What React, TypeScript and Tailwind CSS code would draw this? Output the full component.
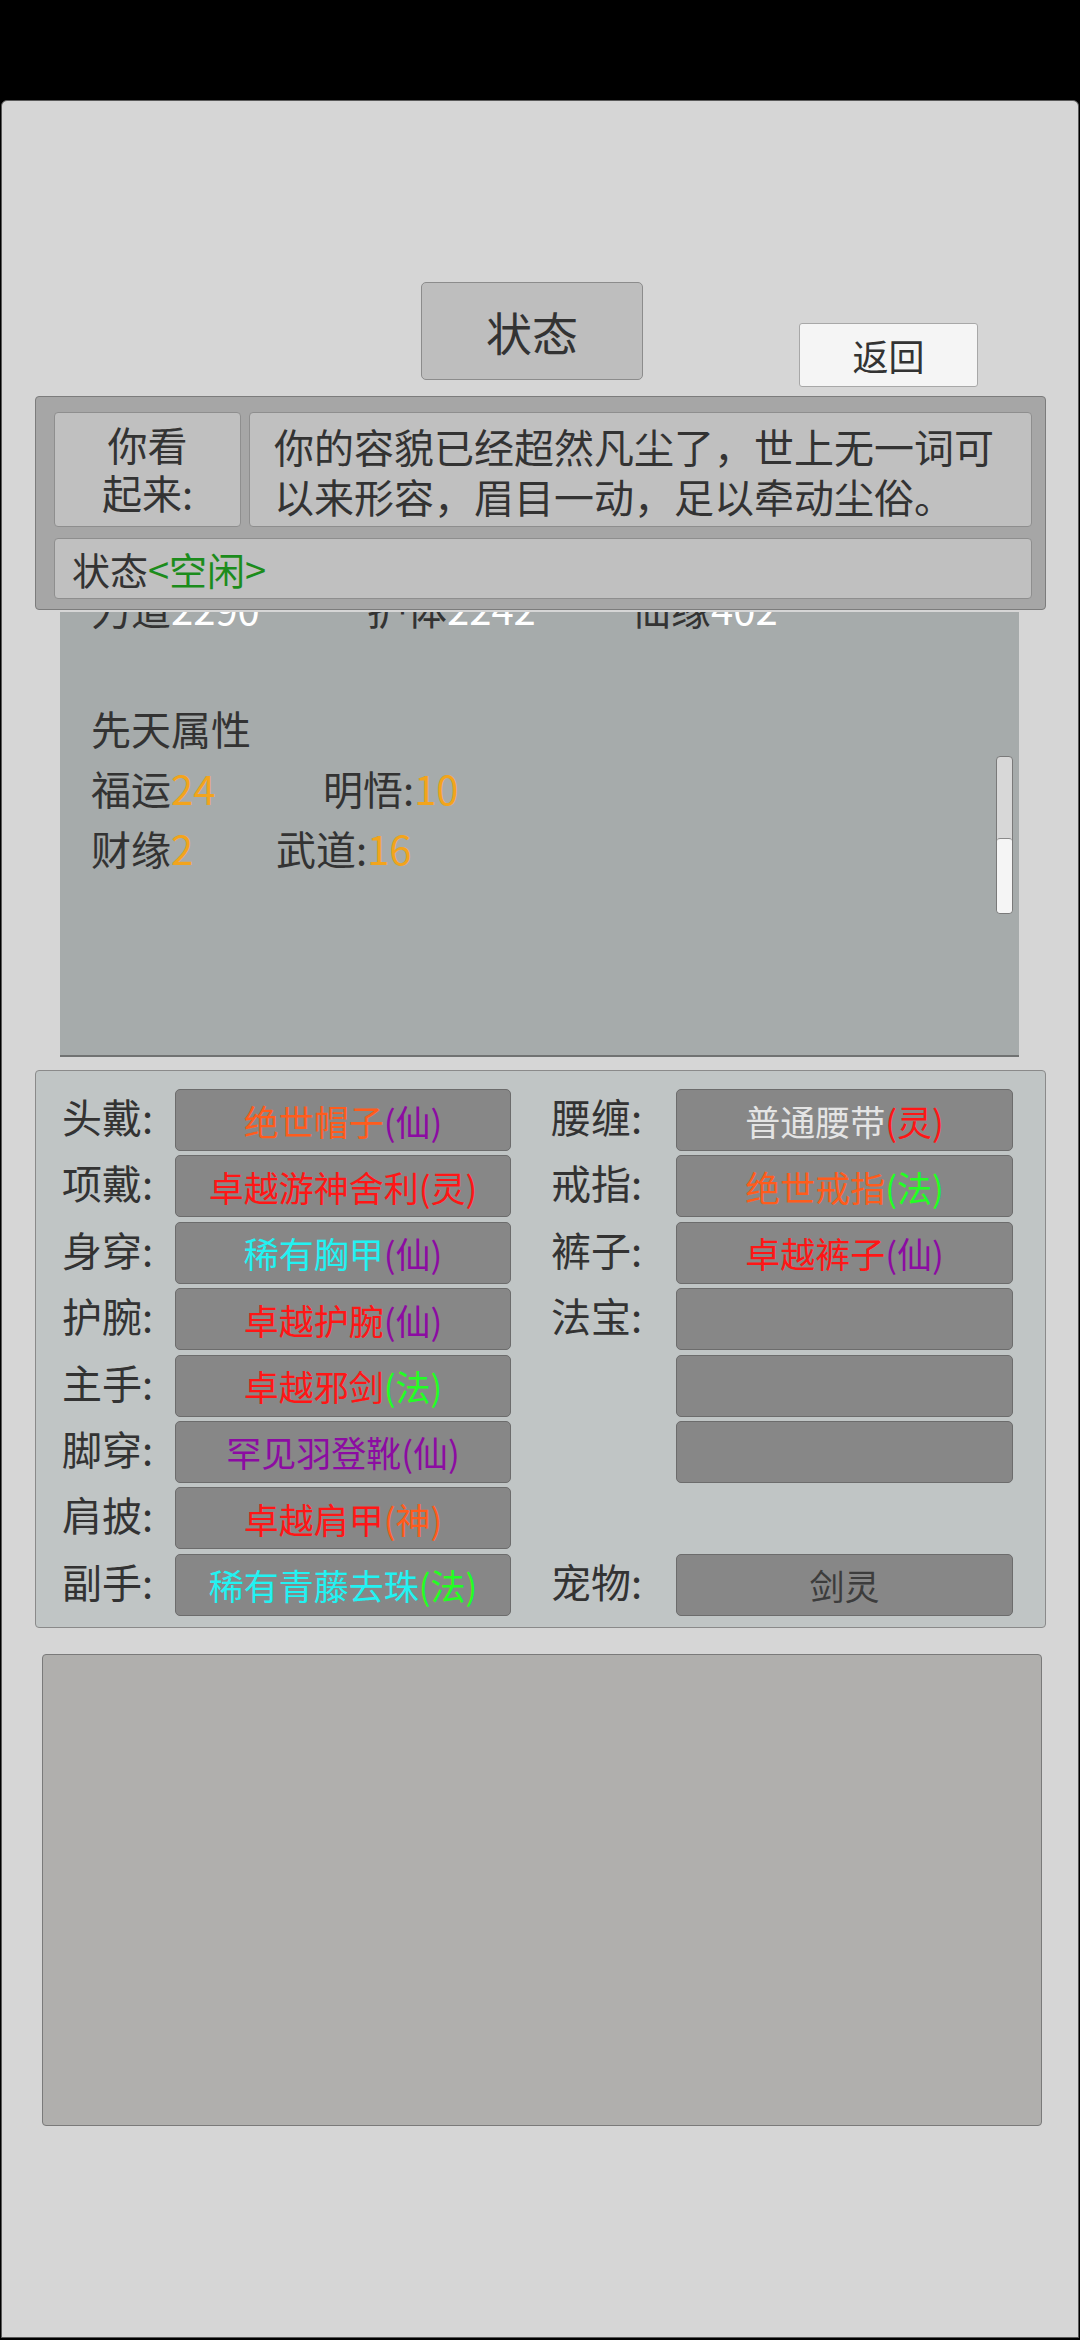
import React from "react";

type Part = { text: string; color: string };
type Slot = { label?: string; parts?: Part[]; box?: boolean };

const ORANGE = "#ff5c1c";
const RED = "#ff1616";
const PURPLE = "#8c0ca2";
const CYAN = "#22f2f2";
const GREEN = "#22ff22";

const leftSlots: Slot[] = [
  { label: "头戴:", parts: [{ text: "绝世帽子", color: ORANGE }, { text: "(仙)", color: PURPLE }] },
  { label: "项戴:", parts: [{ text: "卓越游神舍利(灵)", color: RED }] },
  { label: "身穿:", parts: [{ text: "稀有胸甲", color: CYAN }, { text: "(仙)", color: PURPLE }] },
  { label: "护腕:", parts: [{ text: "卓越护腕", color: RED }, { text: "(仙)", color: PURPLE }] },
  { label: "主手:", parts: [{ text: "卓越邪剑", color: RED }, { text: "(法)", color: GREEN }] },
  { label: "脚穿:", parts: [{ text: "罕见羽登靴(仙)", color: PURPLE }] },
  { label: "肩披:", parts: [{ text: "卓越肩甲", color: RED }, { text: "(神)", color: ORANGE }] },
  { label: "副手:", parts: [{ text: "稀有青藤去珠", color: CYAN }, { text: "(法)", color: GREEN }] },
];

const rightSlots: Slot[] = [
  { label: "腰缠:", parts: [{ text: "普通腰带", color: "#e4e4e4" }, { text: "(灵)", color: RED }] },
  { label: "戒指:", parts: [{ text: "绝世戒指", color: ORANGE }, { text: "(法)", color: GREEN }] },
  { label: "裤子:", parts: [{ text: "卓越裤子", color: RED }, { text: "(仙)", color: PURPLE }] },
  { label: "法宝:", box: true },
  { box: true },
  { box: true },
  {},
  { label: "宠物:", parts: [{ text: "剑灵", color: "#3c3c3c" }] },
];

function SlotRow({ slot, labelWidth, boxWidth }: { slot: Slot; labelWidth: string; boxWidth: string }) {
  const hasBox = slot.box || slot.parts;
  return (
    <div className="flex h-[62px] items-center">
      <div className={`${labelWidth} pb-[8px] text-[40px] leading-none text-[#333]`}>{slot.label}</div>
      {hasBox && (
        <div
          className={`${boxWidth} flex h-[62px] items-center justify-center rounded-[5px] border border-[#6c6c6c] bg-[#878787] text-[35px] leading-none`}
        >
          {slot.parts?.map((p, i) => (
            <span key={i} style={{ color: p.color }}>
              {p.text}
            </span>
          ))}
        </div>
      )}
    </div>
  );
}

export default function App() {
  return (
    <div
      className="h-[2340px] w-[1080px] overflow-hidden bg-black pt-[100px]"
      style={{ fontFamily: '"Noto Sans CJK SC", "Noto Sans", sans-serif' }}
    >
      <div className="ml-[1px] h-[2238px] w-[1078px] rounded-t-[6px] border border-[#5a5a5a] bg-[#d6d6d6]">
        {/* header */}
        <div className="flex h-[295px] items-start">
          <div className="ml-[419px] mt-[181px] flex h-[98px] w-[222px] items-center justify-center rounded-[5px] border border-[#8c8c8c] bg-[#bebebe] text-[46px] leading-none text-[#333]">
            状态
          </div>
          <div className="ml-[156px] mt-[222px] flex h-[64px] w-[179px] items-center justify-center rounded-[3px] border border-[#a8a8a8] bg-[#f5f5f5] text-[36px] leading-none text-[#333]">
            返回
          </div>
        </div>

        {/* look panel */}
        <div className="ml-[33px] flex h-[214px] w-[1011px] flex-col gap-[11px] rounded-[4px] border border-[#7c7c7c] bg-[#a6a6a6] pb-[10px] pl-[18px] pr-[13px] pt-[15px]">
          <div className="flex h-[116px] gap-[8px]">
            <div className="flex w-[187px] flex-col items-center justify-center rounded-[4px] border border-[#8e8e8e] bg-[#c0c0c0] pb-[4px] text-[40px] leading-[48px] text-[#333]">
              <span>你看</span>
              <span>起来:</span>
            </div>
            <div className="flex-1 rounded-[4px] border border-[#8e8e8e] bg-[#c0c0c0] pl-[24px] pt-[8px] text-[40px] leading-[50px] text-[#333]">
              <div className="w-[730px]">你的容貌已经超然凡尘了，世上无一词可以来形容，眉目一动，足以牵动尘俗。</div>
            </div>
          </div>
          <div className="flex h-[61px] items-center rounded-[4px] border border-[#8e8e8e] bg-[#c0c0c0] pl-[17px] text-[38px] leading-none text-[#333]">
            状态<span className="text-[#1c8c1c]">&lt;空闲&gt;</span>
          </div>
        </div>

        {/* scroll area */}
        <div className="relative ml-[58px] mt-[2px] h-[445px] w-[959px] overflow-hidden border-b-2 border-[#707272] bg-[#a6abab]">
          <div className="-mt-[34px] pl-[31px] text-[40px] leading-[60px] text-[#333]">
            <div className="flex">
              <span className="w-[276px]">
                力道<span className="text-white">2290</span>
              </span>
              <span className="w-[264px]">
                护体<span className="text-white">2242</span>
              </span>
              <span>
                仙缘<span className="text-white">402</span>
              </span>
            </div>
            <div className="h-[60px]" />
            <div>先天属性</div>
            <div className="flex">
              <span className="w-[232px]">
                福运<span className="text-[#f2a41c]">24</span>
              </span>
              <span>
                明悟:<span className="text-[#f2a41c]">10</span>
              </span>
            </div>
            <div className="flex">
              <span className="w-[185px]">
                财缘<span className="text-[#f2a41c]">2</span>
              </span>
              <span>
                武道:<span className="text-[#f2a41c]">16</span>
              </span>
            </div>
          </div>
          <div className="absolute left-[936px] top-[144px] flex h-[158px] w-[17px] flex-col overflow-hidden rounded-[4px] border border-[#7a7a7a] bg-[#d8d8d8]">
            <div className="h-[81px]" />
            <div className="flex-1 rounded-[3px] border-t border-[#8a8a8a] bg-[#f5f5f5]" />
          </div>
        </div>

        {/* equipment panel */}
        <div className="ml-[33px] mt-[13px] flex h-[558px] w-[1011px] gap-[40px] rounded-[4px] border border-[#8a8a8a] bg-[#c0c5c5] pl-[26px] pt-[18px]">
          <div className="flex flex-col gap-[4.4px]">
            {leftSlots.map((s, i) => (
              <SlotRow key={i} slot={s} labelWidth="w-[113px]" boxWidth="w-[336px]" />
            ))}
          </div>
          <div className="flex flex-col gap-[4.4px]">
            {rightSlots.map((s, i) => (
              <SlotRow key={i} slot={s} labelWidth="w-[125px]" boxWidth="w-[337px]" />
            ))}
          </div>
        </div>

        {/* bottom box */}
        <div className="ml-[40px] mt-[26px] h-[472px] w-[1000px] rounded-[4px] border border-[#7a7a7a] bg-[#b0afad]" />
      </div>
    </div>
  );
}
